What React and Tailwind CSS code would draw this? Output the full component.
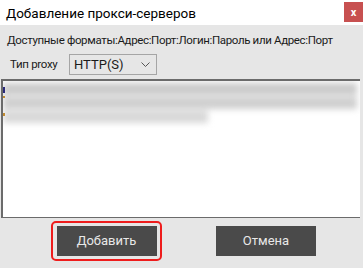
import React from "react";

export default function App() {
  return (
    <div
      className="w-[363px] h-[268px] overflow-hidden bg-[#e6e6e6] flex flex-col text-[#1a1a1a]"
      style={{ fontFamily: "Roboto, 'Noto Sans', sans-serif" }}
    >
      {/* Title bar */}
      <div className="h-[25px] bg-white flex items-start justify-between">
        <span className="pl-[6px] pt-[4px] text-[13.5px] leading-[18px] text-black whitespace-nowrap">
          Добавление прокси-серверов
        </span>
        <div className="mt-[2px] w-[19px] h-[20px] bg-[#c75050] flex items-center justify-center text-white text-[11px] font-bold leading-none">
          x
        </div>
      </div>

      {/* Formats hint */}
      <div className="h-[29px] flex items-center pl-[7px] pt-[2px] text-[11.5px] tracking-[-0.35px] whitespace-nowrap">
        Доступные форматы:Адрес:Порт:Логин:Пароль или Адрес:Порт
      </div>

      {/* Proxy type */}
      <div className="h-[21px] flex items-center">
        <span className="pl-[10px] w-[69px] text-[11.5px] tracking-[-0.3px]">Тип proxy</span>
        <div className="w-[88px] h-[21px] border border-[#a5a5a5] bg-[#e6e6e6] flex items-center justify-between pl-[4px] pr-[6px] text-[13px]">
          <span>HTTP(S)</span>
          <svg width="9" height="5" viewBox="0 0 9 5" fill="none">
            <path d="M0.5 0.5 L4.5 4.5 L8.5 0.5" stroke="#555" strokeWidth="1" />
          </svg>
        </div>
      </div>

      {/* Proxy list */}
      <div className="mt-[4px] ml-[1px] w-[359px] h-[139px] bg-white border-t-2 border-l-2 border-b border-[#6b6b6b] relative overflow-hidden">
        <div className="pt-[2px] flex flex-col gap-[2px] blur-[3px]">
          <div className="h-[12px] w-[354px] bg-[#cbcbcb]" />
          <div className="h-[12px] w-[354px] bg-[#cfcfcf]" />
          <div className="h-[12px] w-[205px] bg-[#d8d8d8]" />
        </div>
        <div className="absolute left-0 top-[6px] w-[2px] h-[6px] bg-[#2a2a7a]" />
        <div className="absolute left-0 top-[15px] w-[2px] h-[2px] bg-[#c08a30]" />
        <div className="absolute left-0 top-[32px] w-[2px] h-[3px] bg-[#c08a30]" />
      </div>

      {/* Buttons */}
      <div className="flex items-start pt-[3px]">
        <div className="ml-[51px] w-[111px] h-[40px] rounded-[5px] border-2 border-[#ee1c1c] flex items-center justify-center">
          <button className="w-[100px] h-[30px] bg-[#4a4a4a] text-[#e8e8e8] text-[13px]">
            Добавить
          </button>
        </div>
        <button className="ml-[54px] mt-[5px] w-[100px] h-[30px] bg-[#4a4a4a] text-[#e8e8e8] text-[13px]">
          Отмена
        </button>
      </div>
    </div>
  );
}
